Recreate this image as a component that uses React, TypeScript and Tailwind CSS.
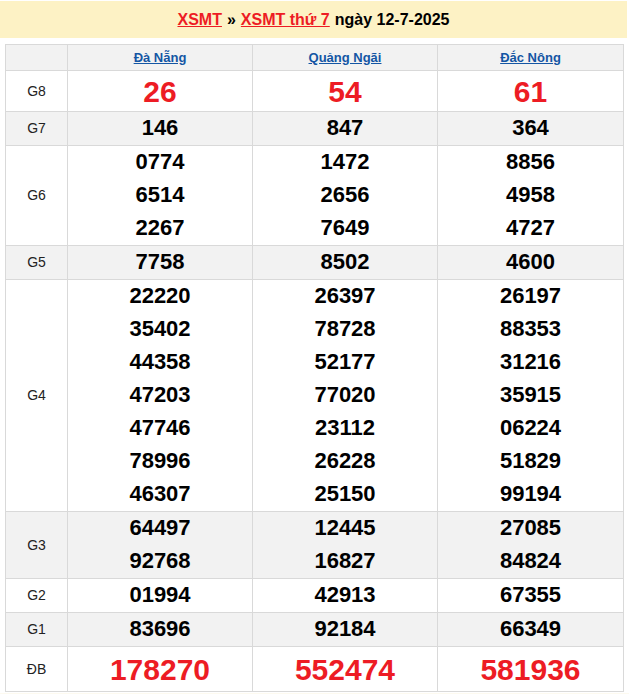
import React from "react";

const provinces = ["Đà Nẵng", "Quảng Ngãi", "Đắc Nông"];

type Row = { label: string; values: string[][]; big?: boolean; gray?: boolean; h?: string };

const rows: Row[] = [
  { label: "G8", values: [["26"], ["54"], ["61"]], big: true, h: "h-[40px]" },
  { label: "G7", values: [["146"], ["847"], ["364"]], gray: true },
  {
    label: "G6",
    values: [
      ["0774", "6514", "2267"],
      ["1472", "2656", "7649"],
      ["8856", "4958", "4727"],
    ],
  },
  { label: "G5", values: [["7758"], ["8502"], ["4600"]], gray: true },
  {
    label: "G4",
    values: [
      ["22220", "35402", "44358", "47203", "47746", "78996", "46307"],
      ["26397", "78728", "52177", "77020", "23112", "26228", "25150"],
      ["26197", "88353", "31216", "35915", "06224", "51829", "99194"],
    ],
  },
  {
    label: "G3",
    values: [
      ["64497", "92768"],
      ["12445", "16827"],
      ["27085", "84824"],
    ],
    gray: true,
  },
  { label: "G2", values: [["01994"], ["42913"], ["67355"]] },
  { label: "G1", values: [["83696"], ["92184"], ["66349"]], gray: true },
  { label: "ĐB", values: [["178270"], ["552474"], ["581936"]], big: true, h: "h-[44px]" },
];

export default function App() {
  return (
    <div className="w-[629px] h-[694px] bg-white font-['Liberation_Sans',Arial,sans-serif] pt-px overflow-hidden">
      {/* TITLE */}
      <div className="w-[627px] h-[37px] bg-[#fdf2c5] flex items-center justify-center text-[16px] font-bold text-black">
        <a className="text-[#ed1c24] underline">XSMT</a>
        <span className="mx-[5px]">»</span>
        <a className="text-[#ed1c24] underline">XSMT thứ 7</a>
        <span className="ml-[5px]">ngày 12-7-2025</span>
      </div>

      {/* TABLE */}
      <div className="pt-[6px] pl-[5px]">
        <table className="border-collapse w-[618px] table-fixed">
          <colgroup>
            <col className="w-[62px]" />
            <col className="w-[185px]" />
            <col className="w-[185px]" />
            <col className="w-[186px]" />
          </colgroup>
          <thead>
            <tr className="bg-[#f2f2f2] h-[26px]">
              <th className="border border-[#d9d9d9]"></th>
              {provinces.map((p) => (
                <th key={p} className="border border-[#d9d9d9] text-[13px] font-bold text-[#1456a4] p-0">
                  <a className="underline">{p}</a>
                </th>
              ))}
            </tr>
          </thead>
          <tbody>
            {rows.map((r) => (
              <tr key={r.label} className={r.gray ? "bg-[#f2f2f2]" : "bg-white"}>
                <td className="border border-[#d9d9d9] text-center text-[14px] text-[#222] p-0">{r.label}</td>
                {r.values.map((col, i) => (
                  <td key={i} className="border border-[#d9d9d9] text-center p-0">
                    {col.map((n) =>
                      r.big ? (
                        <div key={n} className={`${r.h} flex items-center justify-center text-[30px] font-bold text-[#ed1c24]`}>
                          {n}
                        </div>
                      ) : (
                        <div key={n} className="h-[33px] leading-[32px] text-[22px] font-bold text-black">
                          {n}
                        </div>
                      )
                    )}
                  </td>
                ))}
              </tr>
            ))}
          </tbody>
        </table>
      </div>
      <div className="h-[4px] bg-[#fdfaf0] mt-px"></div>
    </div>
  );
}
